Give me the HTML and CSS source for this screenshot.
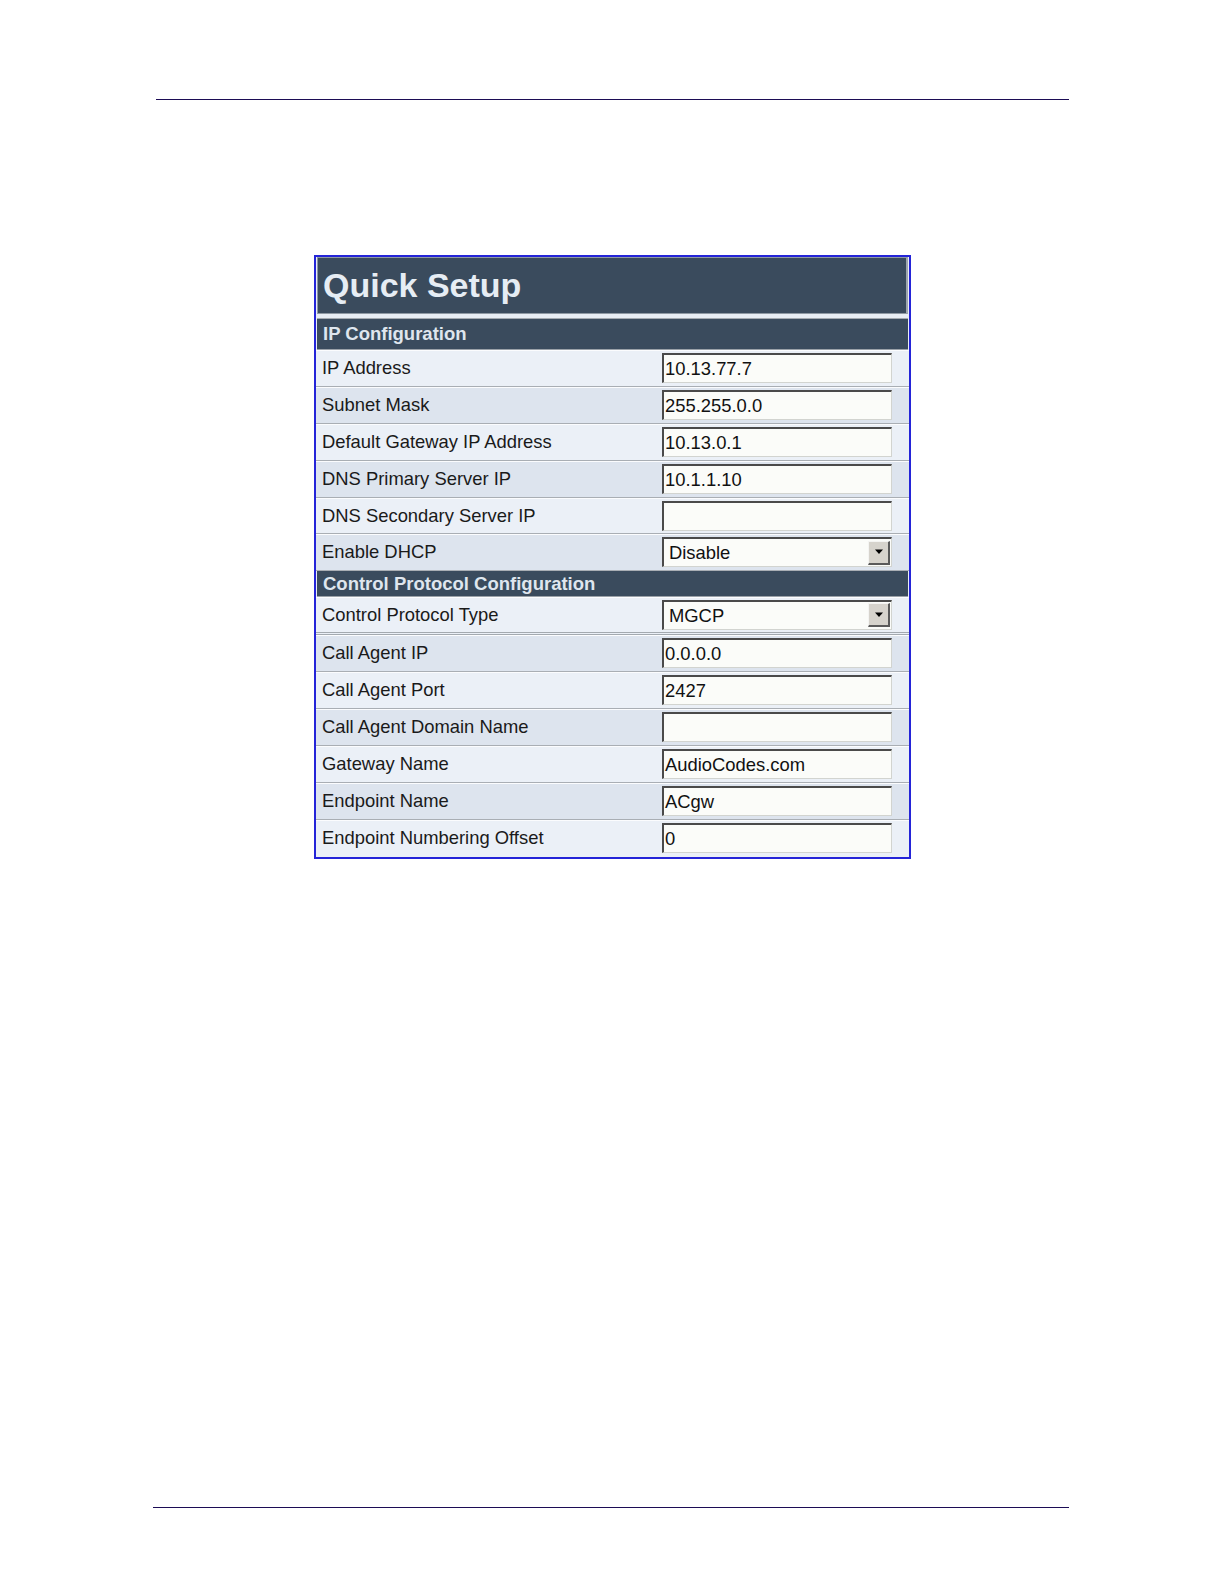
FILE: index.html
```html
<!DOCTYPE html>
<html>
<head>
<meta charset="utf-8">
<link rel="stylesheet" href="styles.css">
</head>
<body>
<div class="topline"></div>
<div class="panel">
  <div class="title">Quick Setup</div>
  <div class="gap"></div>
  <div class="section first">IP Configuration</div>
  <div class="row light"><span class="label">IP Address</span><span class="field">10.13.77.7</span></div>
  <div class="row dark"><span class="label">Subnet Mask</span><span class="field">255.255.0.0</span></div>
  <div class="row light"><span class="label">Default Gateway IP Address</span><span class="field">10.13.0.1</span></div>
  <div class="row dark"><span class="label">DNS Primary Server IP</span><span class="field">10.1.1.10</span></div>
  <div class="row light"><span class="label">DNS Secondary Server IP</span><span class="field"></span></div>
  <div class="row dark"><span class="label">Enable DHCP</span><span class="field select"><span class="val">Disable</span><span class="btn"><svg width="10" height="6" viewBox="0 0 10 6"><path d="M1 0.5h8L5 5z" fill="#000"/></svg></span></span></div>
  <div class="section second">Control Protocol Configuration</div>
  <div class="row light cpt"><span class="label">Control Protocol Type</span><span class="field select"><span class="val">MGCP</span><span class="btn"><svg width="10" height="6" viewBox="0 0 10 6"><path d="M1 0.5h8L5 5z" fill="#000"/></svg></span></span></div>
  <div class="row dark"><span class="label">Call Agent IP</span><span class="field">0.0.0.0</span></div>
  <div class="row light"><span class="label">Call Agent Port</span><span class="field">2427</span></div>
  <div class="row dark"><span class="label">Call Agent Domain Name</span><span class="field"></span></div>
  <div class="row light"><span class="label">Gateway Name</span><span class="field">AudioCodes.com</span></div>
  <div class="row dark"><span class="label">Endpoint Name</span><span class="field">ACgw</span></div>
  <div class="row light last"><span class="label">Endpoint Numbering Offset</span><span class="field">0</span></div>
</div>
<div class="bottomline"></div>
</body>
</html>
```
FILE: styles.css
```css
html, body {
  margin: 0;
  padding: 0;
  background: #ffffff;
}
body {
  font-family: "Liberation Sans", Arial, sans-serif;
  width: 1224px;
  height: 1584px;
  position: relative;
}
.topline {
  margin-left: 156px;
  width: 913px;
  padding-top: 99px;
  border-bottom: 1px solid #1c0c55;
}
.panel {
  box-sizing: border-box;
  margin-top: 155px;
  margin-left: 314px;
  width: 597px;
  border: 2px solid #2424d8;
  background: #e9eef6;
  display: flex;
  flex-direction: column;
}
.title {
  box-sizing: border-box;
  height: 57px;
  margin: 0 1px 0 1px;
  background: #3a4b5d;
  border: 1px solid #8f99a3;
  border-right: 2px solid #9ea6ae;
  color: #e6edf4;
  font-weight: bold;
  font-size: 34px;
  line-height: 55px;
  padding-left: 5px;
}
.gap {
  height: 4px;
  background: #e8edf4;
  border-bottom: 1px solid #a4aab0;
  margin: 0 1px;
}
.section {
  box-sizing: border-box;
  background: #3a4b5d;
  color: #dfe6ee;
  font-weight: bold;
  font-size: 18.5px;
  padding-left: 6px;
  margin: 0 1px;
  border-bottom: 1px solid #9aa1a8;
}
.section.first {
  height: 31px;
  line-height: 30px;
}
.section.second {
  height: 26px;
  line-height: 25px;
}
.row {
  box-sizing: border-box;
  height: 36.9px;
  display: flex;
  align-items: center;
  padding-left: 6px;
  border-bottom: 1px solid #a9aeb4;
  box-shadow: inset 0 1px 0 #fbfcfe;
}
.row.light { background: #ebf0f7; }
.row.dark { background: #dde4ee; }
.row.cpt {
  height: 38px;
  border-bottom: 3px double #a3a9af;
}
.row.last { border-bottom: none; }
.label {
  width: 340px;
  font-size: 18.4px;
  color: #1a1a1a;
}
.field {
  box-sizing: border-box;
  width: 230px;
  height: 30px;
  background: #fbfcf9;
  border-top: 2px solid #4a4a4a;
  border-left: 2px solid #4a4a4a;
  border-right: 1px solid #d2d4d0;
  border-bottom: 1px solid #d2d4d0;
  font-size: 18.4px;
  line-height: 27px;
  color: #111;
  padding-left: 1px;
  display: flex;
  align-items: center;
}
.field.select {
  justify-content: space-between;
  padding-left: 5px;
  padding-right: 1px;
}
.btn {
  box-sizing: border-box;
  width: 22px;
  height: 24px;
  background: #d6d3cc;
  border-top: 1px solid #f4f4f2;
  border-left: 1px solid #f4f4f2;
  border-right: 2px solid #5a5a5a;
  border-bottom: 2px solid #5a5a5a;
  display: flex;
  align-items: center;
  justify-content: center;
}
.bottomline {
  position: absolute;
  left: 153px;
  top: 1507px;
  width: 916px;
  border-bottom: 1px solid #1c0c55;
}
```
